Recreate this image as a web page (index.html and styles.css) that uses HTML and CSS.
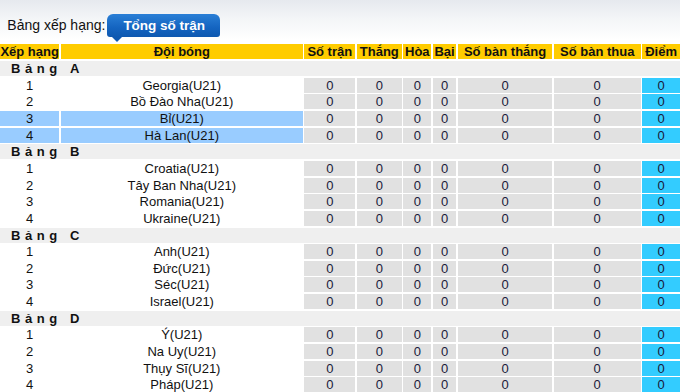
FILE: index.html
```html
<!DOCTYPE html>
<html lang="vi">
<head>
<meta charset="utf-8">
<title>Bảng xếp hạng</title>
<link rel="stylesheet" href="styles.css">
</head>
<body>
<div class="page">
  <div class="titlebar">
    <span class="title">Bảng xếp hạng:</span>
    <span class="tab">Tổng số trận</span>
  </div>
  <div class="standings">
    <div class="row head">
      <div>Xếp hạng</div><div>Đội bóng</div><div>Số trận</div><div>Thắng</div><div>Hòa</div><div>Bại</div><div>Số bàn thắng</div><div>Số bàn thua</div><div>Điểm</div>
    </div>

    <div class="group">Bảng&nbsp;A</div>
    <div class="row"><div class="rank">1</div><div class="team">Georgia(U21)</div><div class="num">0</div><div class="num">0</div><div class="num">0</div><div class="num">0</div><div class="num">0</div><div class="num">0</div><div class="pts">0</div></div>
    <div class="row"><div class="rank">2</div><div class="team">Bồ Đào Nha(U21)</div><div class="num">0</div><div class="num">0</div><div class="num">0</div><div class="num">0</div><div class="num">0</div><div class="num">0</div><div class="pts">0</div></div>
    <div class="row hl"><div class="rank">3</div><div class="team">Bỉ(U21)</div><div class="num">0</div><div class="num">0</div><div class="num">0</div><div class="num">0</div><div class="num">0</div><div class="num">0</div><div class="pts">0</div></div>
    <div class="row hl"><div class="rank">4</div><div class="team">Hà Lan(U21)</div><div class="num">0</div><div class="num">0</div><div class="num">0</div><div class="num">0</div><div class="num">0</div><div class="num">0</div><div class="pts">0</div></div>

    <div class="group">Bảng&nbsp;B</div>
    <div class="row"><div class="rank">1</div><div class="team">Croatia(U21)</div><div class="num">0</div><div class="num">0</div><div class="num">0</div><div class="num">0</div><div class="num">0</div><div class="num">0</div><div class="pts">0</div></div>
    <div class="row"><div class="rank">2</div><div class="team">Tây Ban Nha(U21)</div><div class="num">0</div><div class="num">0</div><div class="num">0</div><div class="num">0</div><div class="num">0</div><div class="num">0</div><div class="pts">0</div></div>
    <div class="row"><div class="rank">3</div><div class="team">Romania(U21)</div><div class="num">0</div><div class="num">0</div><div class="num">0</div><div class="num">0</div><div class="num">0</div><div class="num">0</div><div class="pts">0</div></div>
    <div class="row"><div class="rank">4</div><div class="team">Ukraine(U21)</div><div class="num">0</div><div class="num">0</div><div class="num">0</div><div class="num">0</div><div class="num">0</div><div class="num">0</div><div class="pts">0</div></div>

    <div class="group">Bảng&nbsp;C</div>
    <div class="row"><div class="rank">1</div><div class="team">Anh(U21)</div><div class="num">0</div><div class="num">0</div><div class="num">0</div><div class="num">0</div><div class="num">0</div><div class="num">0</div><div class="pts">0</div></div>
    <div class="row"><div class="rank">2</div><div class="team">Đức(U21)</div><div class="num">0</div><div class="num">0</div><div class="num">0</div><div class="num">0</div><div class="num">0</div><div class="num">0</div><div class="pts">0</div></div>
    <div class="row"><div class="rank">3</div><div class="team">Séc(U21)</div><div class="num">0</div><div class="num">0</div><div class="num">0</div><div class="num">0</div><div class="num">0</div><div class="num">0</div><div class="pts">0</div></div>
    <div class="row"><div class="rank">4</div><div class="team">Israel(U21)</div><div class="num">0</div><div class="num">0</div><div class="num">0</div><div class="num">0</div><div class="num">0</div><div class="num">0</div><div class="pts">0</div></div>

    <div class="group">Bảng&nbsp;D</div>
    <div class="row"><div class="rank">1</div><div class="team">Ý(U21)</div><div class="num">0</div><div class="num">0</div><div class="num">0</div><div class="num">0</div><div class="num">0</div><div class="num">0</div><div class="pts">0</div></div>
    <div class="row"><div class="rank">2</div><div class="team">Na Uy(U21)</div><div class="num">0</div><div class="num">0</div><div class="num">0</div><div class="num">0</div><div class="num">0</div><div class="num">0</div><div class="pts">0</div></div>
    <div class="row"><div class="rank">3</div><div class="team">Thụy Sĩ(U21)</div><div class="num">0</div><div class="num">0</div><div class="num">0</div><div class="num">0</div><div class="num">0</div><div class="num">0</div><div class="pts">0</div></div>
    <div class="row"><div class="rank">4</div><div class="team">Pháp(U21)</div><div class="num">0</div><div class="num">0</div><div class="num">0</div><div class="num">0</div><div class="num">0</div><div class="num">0</div><div class="pts">0</div></div>
  </div>
</div>
</body>
</html>
```

FILE: styles.css
```css
html, body {
  margin: 0;
  padding: 0;
  background: #fff;
  overflow: hidden;
}

.page {
  width: 680px;
  height: 392px;
  overflow: hidden;
  font-family: "Liberation Sans", Arial, sans-serif;
  font-size: 13px;
  color: #111;
}

.titlebar {
  height: 44.3px;
  box-sizing: border-box;
  padding: 14px 0 0 7.3px;
  display: flex;
  align-items: flex-start;
  background: linear-gradient(#e6e9ee 0px, #f3f5f7 18px, #ffffff 40px);
}

.title {
  font-size: 14px;
  line-height: 23px;
  color: #111;
}

.tab {
  position: relative;
  margin-left: 1.4px;
  width: 113.3px;
  box-sizing: border-box;
  height: 23px;
  line-height: 23px;
  padding-left: 16.6px;
  font-size: 13.5px;
  font-weight: bold;
  color: #fff;
  background: linear-gradient(#2a7fd6, #1464c0 60%, #0e58b0);
  border-radius: 6px 6px 3px 3px;
}

.tab::after {
  content: "";
  position: absolute;
  left: 5.5px;
  bottom: -5px;
  border-left: 5px solid transparent;
  border-right: 5px solid transparent;
  border-top: 5px solid #0e58b0;
}

.standings {
  display: flex;
  flex-direction: column;
  gap: 1.67px;
}

.row {
  display: grid;
  grid-template-columns: 59.3px 241.7px 51px 44.7px 28px 23.3px 94.3px 86.7px 1fr;
  column-gap: 1.67px;
  height: 15px;
  line-height: 15px;
  text-align: center;
  white-space: nowrap;
}

.head > div {
  background: #ffcc00;
  font-weight: bold;
  color: #111;
}

.group {
  height: 15px;
  line-height: 15px;
  background: #efefef;
  font-weight: bold;
  letter-spacing: 4.6px;
  padding-left: 11px;
  color: #111;
}

.num {
  background: #e1e1e1;
  color: #1a1a3a;
}

.pts {
  background: #33ccff;
  color: #1a1a3a;
}

.rank, .team {
  background: #fff;
}

.hl .rank, .hl .team {
  background: #99ccff;
}
```
